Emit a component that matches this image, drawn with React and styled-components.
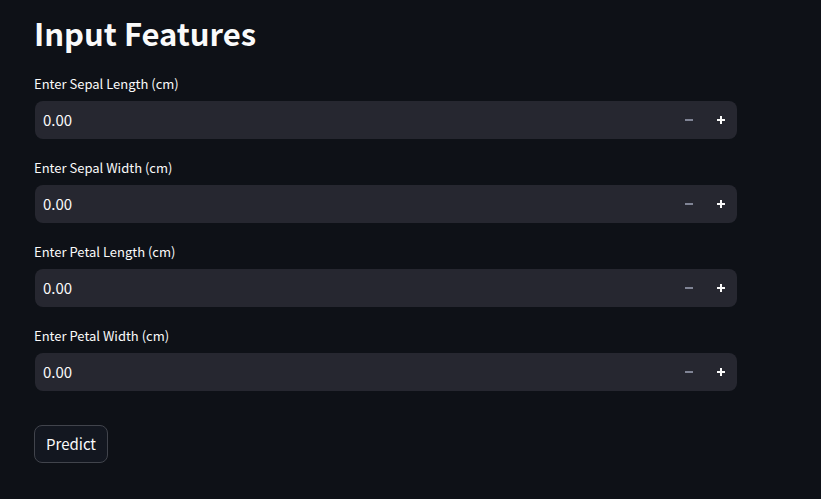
import React, { useState } from "react";
import styled, { createGlobalStyle } from "styled-components";

const GlobalStyle = createGlobalStyle`
  *, *::before, *::after { box-sizing: border-box; }
  body {
    margin: 0;
    background: #0e1117;
    color: #fafafa;
    font-family: "Source Sans Pro", "Noto Sans CJK JP", "Noto Sans", sans-serif;
  }
`;

const Page = styled.main`
  min-height: 100vh;
  padding: 11px 84px 36px 34px;
`;

const Title = styled.h1`
  margin: 0 0 18px;
  font-size: 31px;
  line-height: 44px;
  font-weight: 700;
`;

const Form = styled.form`
  display: flex;
  flex-direction: column;
  align-items: stretch;
  gap: 18px;
`;

const Field = styled.div`
  display: flex;
  flex-direction: column;
  gap: 6px;
`;

const Label = styled.label`
  font-size: 13px;
  line-height: 22px;
`;

const InputBar = styled.div`
  display: flex;
  height: 38px;
  margin-left: 1px;
  overflow: hidden;
  border-radius: 8px;
  background: #262730;
`;

const NumberInput = styled.input`
  flex: 1;
  min-width: 0;
  padding: 0 8px 2px;
  border: 0;
  outline: 0;
  background: transparent;
  color: inherit;
  font: inherit;
  font-size: 15px;
`;

const StepButton = styled.button`
  display: flex;
  align-items: center;
  justify-content: center;
  width: 32px;
  padding: 0;
  border: 0;
  background: transparent;
  color: #fafafa;
  cursor: pointer;

  &:disabled {
    color: #808495;
    cursor: not-allowed;
  }
`;

const PredictButton = styled.button`
  align-self: flex-start;
  height: 38px;
  margin-top: 16px;
  padding: 0 11px 2px;
  border: 1px solid #41444c;
  border-radius: 8px;
  background: #131720;
  color: inherit;
  font: inherit;
  font-size: 15px;
  cursor: pointer;
`;

const StepIcon = ({ plus }) => (
  <svg width="8" height="8" viewBox="0 0 8 8" fill="currentColor" aria-hidden="true">
    <path d={plus ? "M3 0h2v3h3v2H5v3H3V5H0V3h3z" : "M0 3h8v2H0z"} />
  </svg>
);

const features = [
  { id: "sepal-length", label: "Enter Sepal Length (cm)" },
  { id: "sepal-width", label: "Enter Sepal Width (cm)" },
  { id: "petal-length", label: "Enter Petal Length (cm)" },
  { id: "petal-width", label: "Enter Petal Width (cm)" },
];

function NumberField({ id, label }) {
  const [text, setText] = useState("0.00");
  const value = Number(text) || 0;
  const step = (delta) => setText(Math.max(0, value + delta).toFixed(2));

  return (
    <Field>
      <Label htmlFor={id}>{label}</Label>
      <InputBar>
        <NumberInput
          id={id}
          inputMode="decimal"
          value={text}
          onChange={(e) => setText(e.target.value)}
          onBlur={() => step(0)}
        />
        <StepButton type="button" aria-label={`Decrease: ${label}`} disabled={value <= 0} onClick={() => step(-0.01)}>
          <StepIcon />
        </StepButton>
        <StepButton type="button" aria-label={`Increase: ${label}`} onClick={() => step(0.01)}>
          <StepIcon plus />
        </StepButton>
      </InputBar>
    </Field>
  );
}

export default function App() {
  return (
    <>
      <GlobalStyle />
      <Page>
        <Title>Input Features</Title>
        <Form onSubmit={(e) => e.preventDefault()}>
          {features.map((feature) => (
            <NumberField key={feature.id} {...feature} />
          ))}
          <PredictButton type="submit">Predict</PredictButton>
        </Form>
      </Page>
    </>
  );
}
